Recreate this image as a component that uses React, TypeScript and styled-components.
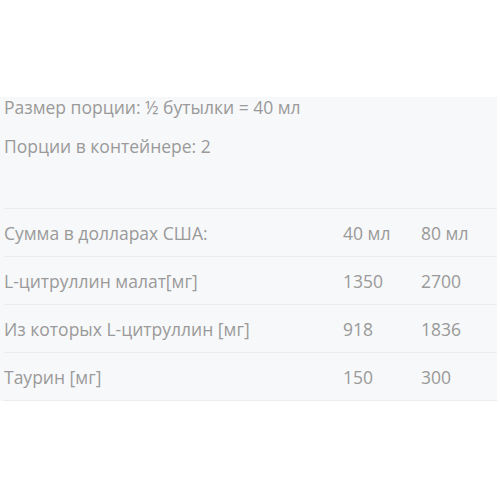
import { createGlobalStyle } from "styled-components"
import styled from "styled-components"

const rows = [
  { name: "Сумма в долларах США:", a: "40 мл", b: "80 мл" },
  { name: "L-цитруллин малат[мг]", a: "1350", b: "2700" },
  { name: "Из которых L-цитруллин [мг]", a: "918", b: "1836" },
  { name: "Таурин [мг]", a: "150", b: "300" },
]

export default function App() {
  return (
    <>
      <GlobalStyle />
      <Page>
        <Panel>
          <Info>Размер порции: ½ бутылки = 40 мл</Info>
          <Info>Порции в контейнере: 2</Info>
          <Table>
            <tbody>
              {rows.map((r) => (
                <Row key={r.name}>
                  <NameCell>{r.name}</NameCell>
                  <ValueCell $width={78}>{r.a}</ValueCell>
                  <ValueCell $width={76}>{r.b}</ValueCell>
                </Row>
              ))}
            </tbody>
          </Table>
        </Panel>
      </Page>
    </>
  )
}

const GlobalStyle = createGlobalStyle`
  body {
    margin: 0;
    background: #ffffff;
    font-family: "Open Sans", "Noto Sans", sans-serif;
  }
`
const Page = styled.div`
  width: 500px;
  height: 500px;
  padding-top: 97px;
  box-sizing: border-box;
`
const Panel = styled.section`
  width: 497px;
  background: #f7f8f9;
  padding: 0 0 0 4px;
  box-sizing: border-box;
`
const Info = styled.p`
  margin: 0;
  height: 39px;
  line-height: 20px;
  font-size: 17.5px;
  color: #9a9a9a;

  & + & {
    height: 72px;
  }
`
const Table = styled.table`
  width: 100%;
  border-collapse: separate;
  border-spacing: 0;
`
const Row = styled.tr`
  &:first-child td {
    border-top: 1px solid #ececec;
  }
`
const NameCell = styled.td`
  height: 47px;
  padding: 0;
  border-bottom: 1px solid #ececec;
  font-size: 17.5px;
  color: #9a9a9a;
`
const ValueCell = styled.td<{ $width: number }>`
  width: ${(p) => p.$width}px;
  height: 47px;
  padding: 0;
  border-bottom: 1px solid #ececec;
  font-size: 17.5px;
  color: #9a9a9a;
`
